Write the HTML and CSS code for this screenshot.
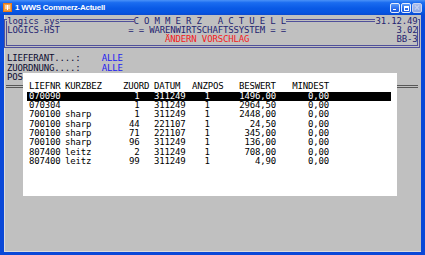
FILE: index.html
```html
<!DOCTYPE html>
<html lang="de">
<head>
  <meta charset="UTF-8" />
  <title>1 WWS Commerz-Actuell</title>
  <link rel="stylesheet" href="styles.css">
</head>
<body>
  <div class="window">
    <div class="titlebar">
      <svg class="app-icon" viewBox="0 0 9 9" aria-hidden="true">
        <rect x="0" y="0" width="9" height="9" fill="#e87a18" />
        <rect x="1" y="1" width="7" height="7" fill="#f4a040" />
        <path d="M2 3h5M2 5h5M4.5 2v5" stroke="#fff" stroke-width="1" />
      </svg>
      <span class="title">1 WWS Commerz-Actuell</span>
      <div class="caption-btns">
        <span class="cbtn min"></span>
        <span class="cbtn max"></span>
        <span class="cbtn close"></span>
      </div>
    </div>

    <div class="client">
      <!-- Kopfbereich -->
      <div class="hdr">
        <div class="hrow first"><b>logics sys</b>              <b>C O M M E R Z   A C T U E L L</b>                 <b>31.12.49</b></div>
        <div class="hrow">LOGICS-HST             = = WARENWIRTSCHAFTSSYSTEM = =                     3.02</div>
        <div class="hrow">                              <span class="red">ÄNDERN VORSCHLAG</span>                            BB-3</div>
      </div>

      <div class="line"><span class="lbl">LIEFERANT....:</span><span class="val">ALLE</span></div>
      <div class="line"><span class="lbl">ZUORDNUNG....:</span><span class="val">ALLE</span></div>
      <div class="line">POS</div>
      <div class="rule"></div>

      <!-- Auswahlfenster -->
      <div class="popup">
        <div class="trow head">
          <span>LIEFNR</span><span>KURZBEZ</span><span>ZUORD</span><span>DATUM</span><span>ANZPOS</span><span>BESWERT</span><span class="r">MINDEST</span>
        </div>
        <div class="trow sel">
          <span>070090</span><span></span><span class="z">1</span><span>311249</span><span class="cnt">1</span><span class="r">1496,00</span><span class="r">0,00</span>
        </div>
        <div class="trow">
          <span>070304</span><span></span><span class="z">1</span><span>311249</span><span class="cnt">1</span><span class="r">2964,50</span><span class="r">0,00</span>
        </div>
        <div class="trow">
          <span>700100</span><span>sharp</span><span class="z">1</span><span>311249</span><span class="cnt">1</span><span class="r">2448,00</span><span class="r">0,00</span>
        </div>
        <div class="trow">
          <span>700100</span><span>sharp</span><span class="z">44</span><span>221107</span><span class="cnt">1</span><span class="r">24,50</span><span class="r">0,00</span>
        </div>
        <div class="trow">
          <span>700100</span><span>sharp</span><span class="z">71</span><span>221107</span><span class="cnt">1</span><span class="r">345,00</span><span class="r">0,00</span>
        </div>
        <div class="trow">
          <span>700100</span><span>sharp</span><span class="z">96</span><span>311249</span><span class="cnt">1</span><span class="r">136,00</span><span class="r">0,00</span>
        </div>
        <div class="trow">
          <span>807400</span><span>leitz</span><span class="z">2</span><span>311249</span><span class="cnt">1</span><span class="r">708,00</span><span class="r">0,00</span>
        </div>
        <div class="trow">
          <span>807400</span><span>leitz</span><span class="z">99</span><span>311249</span><span class="cnt">1</span><span class="r">4,90</span><span class="r">0,00</span>
        </div>
      </div>
    </div>
  </div>
</body>
</html>
```

FILE: styles.css
```css
html, body {
  margin: 0;
  padding: 0;
  background: #ffffff;
}
.window {
  width: 425px;
  height: 255px;
  box-sizing: border-box;
  padding: 0 4px 3px 4px;
  background: #0a48d8;
  display: flex;
  flex-direction: column;
}
.titlebar {
  height: 15px;
  margin: 0 -4px;
  padding: 0 3px 0 3px;
  display: flex;
  align-items: center;
  background: linear-gradient(180deg, #4a92f8 0%, #1a6cf0 18%, #0a5ae6 55%, #0654e0 85%, #0a4ad0 100%);
}
.app-icon {
  width: 9px;
  height: 9px;
  flex: none;
}
.title {
  margin-left: 3px;
  color: #fff;
  font-family: "Liberation Sans", Arial, sans-serif;
  font-weight: bold;
  font-size: 8px;
  letter-spacing: -0.25px;
  line-height: 15px;
}
.caption-btns {
  margin-left: auto;
  display: flex;
  gap: 1px;
}
.cbtn {
  width: 8px;
  height: 8px;
  border: 1px solid #e8eefc;
  border-radius: 2px;
  background: linear-gradient(180deg, #5c9af8 0%, #2a6cec 60%, #1c5ae0 100%);
  position: relative;
}
.cbtn.min::after {
  content: "";
  position: absolute;
  left: 2px;
  bottom: 2px;
  width: 3px;
  height: 1px;
  background: #fff;
}
.cbtn.max::after {
  content: "";
  position: absolute;
  left: 2px;
  top: 2px;
  width: 3px;
  height: 2px;
  border: 1px solid #fff;
  border-top-width: 2px;
}
.cbtn.close {
  border-color: #c8d4f0;
  background: linear-gradient(180deg, #a8bcec 0%, #8ea8e4 100%);
}
.cbtn.close::before,
.cbtn.close::after {
  content: "";
  position: absolute;
  left: 1px;
  top: 3.5px;
  width: 6px;
  height: 1px;
  background: #c4d2f2;
  transform: rotate(45deg);
}
.cbtn.close::after {
  transform: rotate(-45deg);
}

/* Terminalbereich */
.client {
  flex: 1;
  position: relative;
  background: #c0c0c0;
  box-shadow: inset 1px 0 0 #dcdcdc, inset 0 -1px 0 #dcdcdc;
  font-family: "DejaVu Sans Mono", monospace;
  font-size: 9px;
  letter-spacing: -0.16px;
  line-height: 9.37px;
  color: #0c0c30;
}
.hdr {
  margin: 4px 1px 6.4px 0;
  border: 3px double #50509a;
  color: #242470;
}
.hrow {
  height: 9.37px;
  padding-left: 0.3px;
  white-space: pre;
}
.hrow.first {
  margin-top: -5.3px;
}
.hrow b {
  font-weight: normal;
  background: #c0c0c0;
}
.red {
  color: #f42020;
}
.line {
  height: 9.37px;
  padding-left: 3px;
  white-space: pre;
}
.lbl {
  display: inline-block;
  width: 94.7px;
}
.val {
  color: #2020f0;
}
.rule {
  height: 9.37px;
  margin: 0 3px 0 2px;
  display: flex;
  align-items: center;
}
.rule::before {
  content: "";
  flex: 1;
  border-top: 3px double #585858;
}
.popup {
  position: absolute;
  left: 19.3px;
  top: 58.3px;
  width: 373.4px;
  height: 122.7px;
  box-sizing: border-box;
  padding-top: 9px;
  background: #ffffff;
  color: #000;
}
.trow {
  display: grid;
  grid-template-columns: 36px 58px 31px 38px 47px 37px 53px;
  height: 9.37px;
  margin: 0 5.7px 0 3.7px;
  padding-left: 2px;
  white-space: pre;
}
.trow.sel {
  background: #000;
  color: #fff;
}
.trow .r {
  text-align: right;
}
.trow .z {
  text-align: right;
  padding-right: 14.5px;
}
.trow .cnt {
  padding-left: 12.5px;
}
```
